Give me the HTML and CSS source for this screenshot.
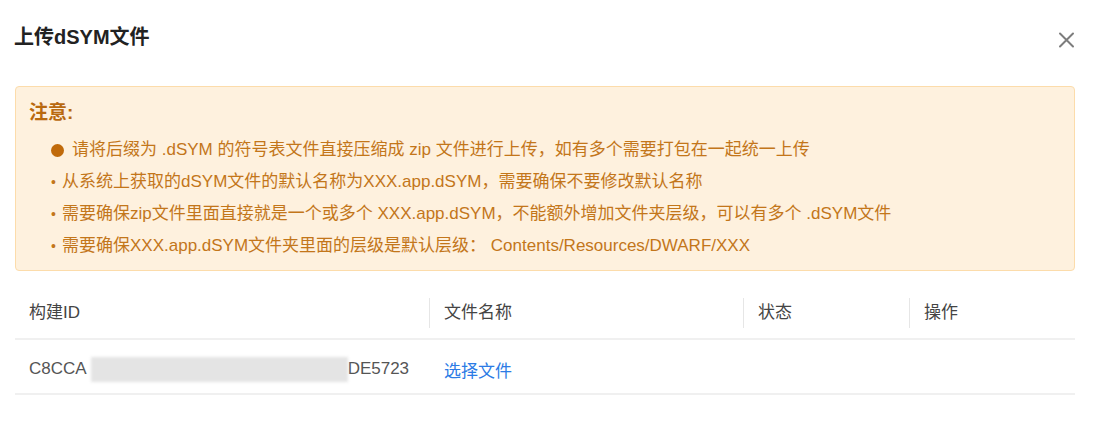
FILE: index.html
```html
<!DOCTYPE html>
<html lang="zh-CN">
<head>
    <meta charset="UTF-8">
    <meta name="viewport" content="width=device-width, initial-scale=1.0">
    <title>上传dSYM文件</title>
    <link rel="stylesheet" href="styles.css">
</head>
<body>

<div class="modal">

    <!-- Header -->
    <div class="modal-header">
        <div class="modal-title">上传dSYM文件</div>
        <div class="close-btn">
            <svg width="17" height="16" viewBox="0 0 17 16">
                <path d="M2 1.5 L15 14.5 M15 1.5 L2 14.5" stroke="#7d7d7d" stroke-width="2" stroke-linecap="round"/>
            </svg>
        </div>
    </div>

    <!-- Notice -->
    <div class="alert">
        <div class="alert-title">注意:</div>
        <ul class="notes">
            <li class="note"><span class="dot"></span>请将后缀为 .dSYM 的符号表文件直接压缩成 zip 文件进行上传，如有多个需要打包在一起统一上传</li>
            <li class="note"><span class="mark">•</span>从系统上获取的dSYM文件的默认名称为XXX.app.dSYM，需要确保不要修改默认名称</li>
            <li class="note"><span class="mark">•</span>需要确保zip文件里面直接就是一个或多个 XXX.app.dSYM，不能额外增加文件夹层级，可以有多个 .dSYM文件</li>
            <li class="note"><span class="mark">•</span>需要确保XXX.app.dSYM文件夹里面的层级是默认层级： Contents/Resources/DWARF/XXX</li>
        </ul>
    </div>

    <!-- Table -->
    <div class="table">
        <div class="table-head">
            <div class="th"><span>构建ID</span></div>
            <div class="th"><span class="sep">文件名称</span></div>
            <div class="th"><span class="sep">状态</span></div>
            <div class="th"><span class="sep">操作</span></div>
        </div>
        <div class="table-row">
            <div class="td">C8CCA<span class="mask"></span>DE5723</div>
            <div class="td td-pad"><a href="#" class="link">选择文件</a></div>
            <div class="td"></div>
            <div class="td"></div>
        </div>
    </div>

</div>

</body>
</html>
```

FILE: styles.css
```css
body, html {
    margin: 0;
    background-color: #fff;
    font-family: "Liberation Sans", "Noto Sans CJK SC", sans-serif;
    color: #333;
}

.modal {
    padding: 0 18px 0 15px;
}

/* Header */
.modal-header {
    display: flex;
    justify-content: space-between;
    align-items: center;
    padding-top: 23px;
    height: 28px;
}

.modal-title {
    font-size: 20px;
    font-weight: bold;
    line-height: 28px;
    color: #222;
    margin-left: -1px;
}

.close-btn {
    width: 17px;
    height: 16px;
    margin-top: 6px;
    cursor: pointer;
}

.close-btn svg {
    display: block;
}

/* Notice */
.alert {
    margin-top: 35px;
    background-color: #fef1de;
    border: 1px solid #fcdcab;
    border-radius: 4px;
    padding: 14px 13px 8px 13px;
    color: #c3761a;
}

.alert-title {
    font-size: 19px;
    font-weight: bold;
    line-height: 24px;
    color: #b9690f;
}

.notes {
    list-style: none;
    margin: 9px 0 0 0;
    padding: 0;
}

.note {
    display: flex;
    align-items: center;
    font-size: 17px;
    line-height: 32px;
    height: 32px;
    white-space: nowrap;
}

.dot {
    width: 13px;
    height: 13px;
    border-radius: 50%;
    background-color: #c06a0a;
    margin: 0 8px 0 22px;
    flex-shrink: 0;
}

.mark {
    width: 11px;
    margin-left: 22px;
    flex-shrink: 0;
    font-size: 14px;
}

/* Table */
.table {
    margin-top: 17px;
    font-size: 17px;
}

.table-head,
.table-row {
    display: grid;
    grid-template-columns: 414px 314px 166px 1fr;
    border-bottom: 2px solid #f0f0f0;
}

.table-head {
    height: 50px;
    align-items: center;
    color: #444;
}

.th span {
    display: block;
    height: 30px;
    line-height: 30px;
    padding-left: 14px;
}

.th .sep {
    border-left: 1px solid #e6e6e6;
}

.table-row {
    height: 55px;
    box-sizing: border-box;
    padding-top: 5px;
    align-items: center;
    color: #555;
}

.td {
    padding-left: 14px;
    display: flex;
    align-items: center;
    white-space: nowrap;
}

.td-pad {
    padding-left: 15px;
}

.mask {
    display: inline-block;
    width: 257px;
    height: 25px;
    margin-left: 4px;
    background-color: #e4e4e4;
    filter: blur(1.5px);
}

.link {
    color: #2c7be5;
    text-decoration: none;
}
```
